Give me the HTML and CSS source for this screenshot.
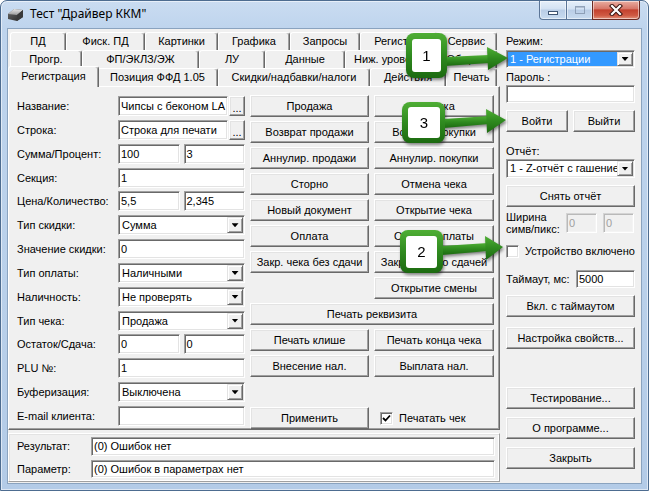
FILE: index.html
```html
<!DOCTYPE html>
<html>
<head>
<meta charset="utf-8">
<title>Тест "Драйвер ККМ"</title>
<link rel="stylesheet" href="styles.css">
</head>
<body>
<div class="win">
  <div class="titlebar">
    <svg class="appicon" viewBox="0 0 17 16" width="17" height="16">
      <defs>
        <linearGradient id="ig1" x1="0" y1="0" x2="0" y2="1"><stop offset="0" stop-color="#e8e8e8"/><stop offset="1" stop-color="#9a9a9a"/></linearGradient>
        <linearGradient id="ig2" x1="0" y1="0" x2="1" y2="1"><stop offset="0" stop-color="#6a6a6a"/><stop offset="1" stop-color="#262626"/></linearGradient>
      </defs>
      <path d="M1 8 L7 3 L16 4 L16 11 L10 15 L1 13 Z" fill="url(#ig2)"/>
      <path d="M1 8 L7 3 L16 4 L10 9 Z" fill="url(#ig1)"/>
      <path d="M10 9 L16 4 L16 11 L10 15 Z" fill="#3a3a3a"/>
    </svg>
    <span class="title">Тест "Драйвер ККМ"</span>
    <div class="caps">
      <div class="cap cap-min"><span class="g-min"></span></div>
      <div class="cap cap-max"><span class="g-max"></span></div>
      <div class="cap cap-close">
        <svg width="14" height="12" viewBox="0 0 14 12"><path d="M3 2 L11 10 M11 2 L3 10" stroke="#3b1410" stroke-width="4.2" stroke-linecap="square"/><path d="M3 2 L11 10 M11 2 L3 10" stroke="#fff" stroke-width="2.2" stroke-linecap="square"/></svg>
      </div>
    </div>
  </div>

  <div class="client">
    <div class="leftcol">
      <div class="tabs">
        <div class="tabrow r1">
          <div class="tab">ПД</div>
          <div class="tab">Фиск. ПД</div>
          <div class="tab">Картинки</div>
          <div class="tab">Графика</div>
          <div class="tab">Запросы</div>
          <div class="tab">Регистры</div>
          <div class="tab">Сервис</div>
        </div>
        <div class="tabrow r2">
          <div class="tab">Прогр.</div>
          <div class="tab">ФП/ЭКЛЗ/ЭЖ</div>
          <div class="tab">ЛУ</div>
          <div class="tab">Данные</div>
          <div class="tab">Ниж. уровень</div>
          <div class="tab">Общее</div>
        </div>
        <div class="tabrow r3">
          <div class="tab sel">Регистрация</div>
          <div class="tab">Позиция ФФД 1.05</div>
          <div class="tab">Скидки/надбавки/налоги</div>
          <div class="tab">Действия</div>
          <div class="tab">Печать</div>
        </div>
      </div>

      <div class="panel">
        <div class="form">
          <div class="lbl">Название:</div>
          <div class="field"><div class="inp">Чипсы с беконом LA</div><div class="btn dots">...</div></div>
          <div class="lbl">Строка:</div>
          <div class="field"><div class="inp">Строка для печати</div><div class="btn dots">...</div></div>
          <div class="lbl">Сумма/Процент:</div>
          <div class="pair"><div class="inp">100</div><div class="inp">3</div></div>
          <div class="lbl">Секция:</div>
          <div class="inp">1</div>
          <div class="lbl">Цена/Количество:</div>
          <div class="pair"><div class="inp">5,5</div><div class="inp">2,345</div></div>
          <div class="lbl">Тип скидки:</div>
          <div class="inp combo"><span class="cv">Сумма</span><span class="arr"></span></div>
          <div class="lbl">Значение скидки:</div>
          <div class="inp">0</div>
          <div class="lbl">Тип оплаты:</div>
          <div class="inp combo"><span class="cv">Наличными</span><span class="arr"></span></div>
          <div class="lbl">Наличность:</div>
          <div class="inp combo"><span class="cv">Не проверять</span><span class="arr"></span></div>
          <div class="lbl">Тип чека:</div>
          <div class="inp combo"><span class="cv">Продажа</span><span class="arr"></span></div>
          <div class="lbl">Остаток/Сдача:</div>
          <div class="pair"><div class="inp">0</div><div class="inp">0</div></div>
          <div class="lbl">PLU №:</div>
          <div class="inp">1</div>
          <div class="lbl">Буферизация:</div>
          <div class="inp combo"><span class="cv">Выключена</span><span class="arr"></span></div>
          <div class="lbl">E-mail клиента:</div>
          <div class="inp"></div>
        </div>

        <div class="actions">
          <div class="btn">Продажа</div>
          <div class="btn">Покупка</div>
          <div class="btn">Возврат продажи</div>
          <div class="btn">Возврат покупки</div>
          <div class="btn">Аннулир. продажи</div>
          <div class="btn">Аннулир. покупки</div>
          <div class="btn">Сторно</div>
          <div class="btn">Отмена чека</div>
          <div class="btn">Новый документ</div>
          <div class="btn">Открытие чека</div>
          <div class="btn">Оплата</div>
          <div class="btn">Отмена оплаты</div>
          <div class="btn">Закр. чека без сдачи</div>
          <div class="btn">Закр. чека со сдачей</div>
          <div class="btn col2">Открытие смены</div>
          <div class="btn span2">Печать реквизита</div>
          <div class="btn">Печать клише</div>
          <div class="btn">Печать конца чека</div>
          <div class="btn">Внесение нал.</div>
          <div class="btn">Выплата нал.</div>
          <div class="btn last-row">Применить</div>
          <div class="chkline last-row"><span class="cb checked"><svg width="9" height="9" viewBox="0 0 9 9"><path d="M1 4 L3.5 6.5 L8 1.5" fill="none" stroke="#000" stroke-width="1.8"/></svg></span><span>Печатать чек</span></div>
        </div>
      </div>

      <div class="resbox">
        <div class="lbl">Результат:</div>
        <div class="inp">(0) Ошибок нет</div>
        <div class="lbl">Параметр:</div>
        <div class="inp">(0) Ошибок в параметрах нет</div>
      </div>
    </div>

    <div class="side">
      <div class="s-lbl s-mode">Режим:</div>
      <div class="inp combo s-combo1"><span class="cv hl">1 - Регистрации</span><span class="arr"></span></div>
      <div class="s-lbl s-pass">Пароль :</div>
      <div class="inp s-pw"></div>
      <div class="s-login"><div class="btn">Войти</div><div class="btn">Выйти</div></div>
      <div class="s-lbl s-rep">Отчёт:</div>
      <div class="inp combo s-combo2"><span class="cv">1 - Z-отчёт с гашением</span><span class="arr"></span></div>
      <div class="btn s-b1">Снять отчёт</div>
      <div class="s-width"><div class="s-wl">Ширина<br>симв/пикс:</div><div class="inp dis">0</div><div class="inp dis">0</div></div>
      <div class="s-chk"><span class="cb"></span><span>Устройство включено</span></div>
      <div class="s-tmo"><span class="s-tl">Таймаут, мс:</span><div class="inp">5000</div></div>
      <div class="btn s-b2">Вкл. с таймаутом</div>
      <div class="btn s-b3">Настройка свойств...</div>
      <div class="btn s-b4">Тестирование...</div>
      <div class="btn s-b5">О программе...</div>
      <div class="btn s-b5">Закрыть</div>
    </div>
  </div>

  <svg class="overlay" width="649" height="491" viewBox="0 0 649 491">
    <defs>
      <linearGradient id="gg" x1="0" y1="0" x2="0" y2="1">
        <stop offset="0" stop-color="#4fae35"/>
        <stop offset="0.5" stop-color="#2f8a1f"/>
        <stop offset="1" stop-color="#1c6a10"/>
      </linearGradient>
    </defs>
    <g class="callout">
      <path d="M445 57 L489 55 L489 63 L445 66 Z" fill="url(#gg)"/>
      <path d="M487 47 L508 58 L488 70 Z" fill="url(#gg)"/>
      <rect x="406" y="33" width="41" height="45" rx="8" fill="url(#gg)"/>
      <rect x="412" y="39" width="29" height="33" rx="3" fill="#fff"/>
      <text x="426.5" y="61" class="cnum">1</text>
    </g>
    <g class="callout">
      <path d="M444 119 L489 116 L489 124 L444 128 Z" fill="url(#gg)"/>
      <path d="M486 109 L506 120 L487 133 Z" fill="url(#gg)"/>
      <rect x="402" y="102" width="43" height="41" rx="8" fill="url(#gg)"/>
      <rect x="408" y="107" width="32" height="31" rx="3" fill="#fff"/>
      <text x="424" y="128" class="cnum">3</text>
    </g>
    <g class="callout">
      <path d="M442 246 L488 243 L488 251 L442 255 Z" fill="url(#gg)"/>
      <path d="M485 236 L503 247 L486 260 Z" fill="url(#gg)"/>
      <rect x="400" y="230" width="43" height="43" rx="8" fill="url(#gg)"/>
      <rect x="406" y="236" width="31" height="32" rx="3" fill="#fff"/>
      <text x="421.5" y="257" class="cnum">2</text>
    </g>
  </svg>
</div>
</body>
</html>
```
FILE: styles.css
```css
* { box-sizing: border-box; }
html, body { margin: 0; padding: 0; background: #fff; }
body {
  width: 649px; height: 491px; overflow: hidden;
  font-family: "Liberation Sans", Arial, sans-serif;
  font-size: 11px; color: #000;
}

.win {
  position: relative;
  width: 649px; height: 491px;
  border: 1px solid #4d6c90;
  border-radius: 7px 7px 0 0;
  background: linear-gradient(180deg, #cadcf1 0, #bed4ed 28px, #b9d0ea 60%, #b3cbe7 100%);
  box-shadow: inset 0 0 0 1px rgba(255,255,255,0.55);
  display: flex; flex-direction: column;
}

/* title bar */
.titlebar { height: 27px; flex: none; display: flex; align-items: flex-start; padding-left: 6px; }
.appicon { margin-top: 5px; flex: none; }
.title {
  margin-top: 5px; margin-left: 6px;
  font-family: "Noto Sans", "Open Sans", sans-serif; font-size: 12px; line-height: 16px; color: #000;
}
.caps { margin-left: auto; margin-right: 8px; display: flex; height: 19px; }
.cap {
  height: 19px; display: flex; align-items: center; justify-content: center;
  border: 1px solid #5b7597; border-top: none;
  background: linear-gradient(180deg, #e6eff9 0, #d3e2f3 45%, #b9cde6 50%, #c8dbf0 100%);
  box-shadow: inset 0 0 0 1px rgba(255,255,255,0.5);
}
.cap-min { width: 27px; border-radius: 0 0 0 4px; border-right: none; }
.cap-max { width: 26px; border-right: none; }
.cap-close {
  width: 48px; border-radius: 0 0 4px 0; border-color: #6b2a22;
  background: linear-gradient(180deg, #e9aea2 0, #d7786a 42%, #c3412e 50%, #cf5a43 80%, #e2937c 100%);
}
.g-min { width: 10px; height: 4px; margin-top: 6px; background: #fff; border: 1px solid #3e5472; }
.g-max { width: 10px; height: 8px; border: 1px solid #8193ab; box-shadow: inset 0 1px 0 #a9b7c9; opacity: 0.8; }

/* client */
.client {
  flex: 1; margin: 0 6px 6px 6px;
  border: 1px solid #8aa3bf;
  background: #f0f0f0;
  display: flex; min-width: 0;
}
.leftcol { width: 492px; flex: none; display: flex; flex-direction: column; padding-top: 3px; }

/* tabs */
.tabs { height: 54px; position: relative; z-index: 2; }
.tabrow { display: flex; height: 18px; margin-left: 2px; width: 487px; }
.tab {
  flex: none; height: 18px; padding: 0 2px;
  background: #f0f0f0;
  border: 1px solid; border-bottom: none;
  border-color: #fff #696969 transparent #fff;
  border-radius: 3px 3px 0 0;
  box-shadow: inset -1px 0 0 #a0a0a0;
  text-align: center; line-height: 16px; white-space: nowrap; overflow: hidden;
}
.r1 .tab:nth-child(1) { width: 56px; }
.r1 .tab:nth-child(2) { width: 79px; }
.r1 .tab:nth-child(3) { width: 73px; }
.r1 .tab:nth-child(4) { width: 72px; }
.r1 .tab:nth-child(5) { width: 70px; }
.r1 .tab:nth-child(6) { width: 76px; }
.r1 .tab:nth-child(7) { width: 61px; }
.r2 .tab:nth-child(1) { width: 72px; }
.r2 .tab:nth-child(2) { width: 117px; }
.r2 .tab:nth-child(3) { width: 66px; }
.r2 .tab:nth-child(4) { width: 80px; }
.r2 .tab:nth-child(5) { width: 87px; }
.r2 .tab:nth-child(6) { width: 65px; }
.r3 .tab:nth-child(1) { width: 91px; }
.r3 .tab:nth-child(2) { width: 121px; }
.r3 .tab:nth-child(3) { width: 152px; }
.r3 .tab:nth-child(4) { width: 76px; }
.r3 .tab:nth-child(5) { width: 51px; }
.tab.sel {
  position: relative; z-index: 3;
  height: 21px; margin: -2px -2px -1px -2px; line-height: 19px;
}

.panel {
  height: 344px; flex: none;
  border: 1px solid; border-color: #fff #696969 #696969 #fff;
  box-shadow: inset -1px -1px 0 #a0a0a0;
  display: flex; gap: 5px; padding: 8px 0 0 8px;
}

/* form */
.form {
  width: 228px; flex: none; margin-top: 1px;
  display: grid; grid-template-columns: 101px 127px;
  grid-auto-rows: 20px; row-gap: 3.85px; align-content: start;
}
.lbl { line-height: 20px; white-space: nowrap; }
.field { display: flex; gap: 1px; min-width: 0; }
.pair { display: flex; gap: 4px; min-width: 0; }
.pair .inp { width: 61px; flex: 1 1 0; }

.inp {
  background: #fff;
  border: 1px solid; border-color: #a0a0a0 #fff #fff #a0a0a0;
  box-shadow: inset 1px 1px 0 #696969, inset -1px -1px 0 #e3e3e3;
  padding: 1px 2px;
  line-height: 16px; height: 100%;
  white-space: nowrap; overflow: hidden;
  flex: 1 1 auto; min-width: 0;
}
.combo { display: flex; padding: 1px; }
.cv { flex: 1 1 0; min-width: 0; padding-left: 2px; overflow: hidden; white-space: nowrap; }
.cv.hl { background: #3399ff; color: #fff; }
.arr {
  width: 16px; flex: none;
  background: #f0f0f0;
  border: 1px solid; border-color: #e3e3e3 #696969 #696969 #e3e3e3;
  box-shadow: inset 1px 1px 0 #fff, inset -1px -1px 0 #a0a0a0;
  display: flex; align-items: center; justify-content: center;
}
.arr::after {
  content: ""; width: 7px; height: 4px; background: #000;
  clip-path: polygon(0 0, 100% 0, 50% 100%);
}

.btn {
  background: #f0f0f0;
  border: 1px solid; border-color: #fff #696969 #696969 #fff;
  box-shadow: inset -1px -1px 0 #a0a0a0, inset 1px 1px 0 #e3e3e3;
  display: flex; align-items: center; justify-content: center;
  white-space: nowrap; line-height: 14px; min-width: 0;
}
.dots { width: 16px; flex: none; padding-bottom: 1px; align-items: flex-end; line-height: 12px; }

/* actions */
.actions {
  width: 244px; flex: none; margin-top: 0;
  display: grid; grid-template-columns: 119px 120px; column-gap: 5px;
  grid-auto-rows: 22px; row-gap: 4px; align-content: start;
}
.col2 { grid-column: 2; }
.span2 { grid-column: 1 / span 2; }
.last-row { grid-row: 13; }
.chkline { display: flex; align-items: center; gap: 6px; padding-left: 6px; }

.cb {
  width: 13px; height: 13px; flex: none; background: #fff;
  border: 1px solid; border-color: #a0a0a0 #fff #fff #a0a0a0;
  box-shadow: inset 1px 1px 0 #696969, inset -1px -1px 0 #e3e3e3;
  display: flex; align-items: center; justify-content: center;
}

/* result box */
.resbox {
  margin-top: 3px; height: 49px;
  border: 1px solid; border-color: #fff #a0a0a0 #a0a0a0 #fff;
  box-shadow: inset 1px 1px 0 #e3e3e3, inset -1px -1px 0 #fff;
  display: grid; grid-template-columns: 74px 404px; grid-template-rows: 19px 18px; row-gap: 4px;
  padding: 3px 0 0 8px;
}
.resbox .lbl { line-height: 19px; }
.resbox .inp { line-height: 15px; }

/* side */
.side { flex: none; width: 141px; min-width: 0; padding: 0 6px; display: flex; flex-direction: column; overflow: hidden; }
.side > * { min-width: 0; }
.s-lbl { line-height: 14px; height: 14px; }
.s-mode { margin-top: 5px; }
.s-combo1 { margin-top: 2px; height: 18px; flex: none; }
.s-combo1 .cv { line-height: 14px; }
.s-pass { margin-top: 2px; }
.s-pw { margin-top: 1px; height: 18px; flex: none; }
.s-login { margin-top: 7px; height: 22px; flex: none; display: flex; gap: 5px; }
.s-login .btn { flex: 1 1 0; }
.s-rep { margin-top: 12px; }
.s-combo2 { margin-top: 1px; height: 19px; flex: none; }
.s-combo2 .cv { line-height: 15px; }
.s-b1 { margin-top: 7px; height: 22px; flex: none; }
.s-width { margin-top: 4px; height: 24px; flex: none; display: flex; align-items: flex-start; }
.s-wl { width: 60px; line-height: 12px; flex: none; }
.s-width .inp { width: 31px; flex: none; height: 20px; margin-top: 2px; }
.s-width .inp + .inp { margin-left: 6px; }
.dis { background: #f0f0f0; color: #a0a0a0; border-color: #d4d4d4 #fff #fff #d4d4d4; box-shadow: inset 1px 1px 0 #b9b9b9, inset -1px -1px 0 #f4f4f4; }
.s-chk { margin-top: 9px; height: 14px; flex: none; display: flex; align-items: center; gap: 6px; }
.s-tmo { margin-top: 12px; height: 18px; flex: none; display: flex; align-items: center; }
.s-tl { width: 70px; flex: none; }
.s-tmo .inp { height: 18px; line-height: 14px; }
.s-b2 { margin-top: 7px; height: 22px; flex: none; }
.s-b3 { margin-top: 10px; height: 22px; flex: none; }
.s-b4 { margin-top: 38px; height: 22px; flex: none; }
.s-b5 { margin-top: 8px; height: 22px; flex: none; }

/* overlay callouts */
.overlay { position: absolute; left: -1px; top: -1px; width: 649px; height: 491px; pointer-events: none; z-index: 10; }
.callout { filter: drop-shadow(1px 2px 1.5px rgba(0,0,0,0.45)); }
.cnum { font-family: "Liberation Sans", Arial, sans-serif; font-size: 15px; text-anchor: middle; fill: #000; }
```
